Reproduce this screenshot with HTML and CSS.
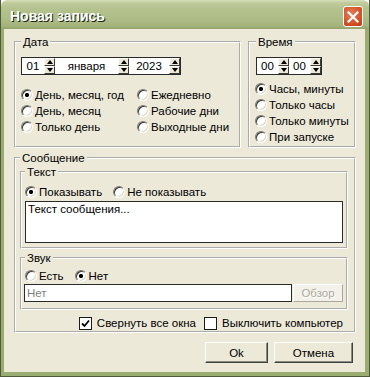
FILE: index.html
```html
<!DOCTYPE html>
<html lang="ru">
<head>
    <meta charset="UTF-8">
    <title>Новая запись</title>
    <link rel="stylesheet" href="styles.css">
</head>
<body>
    <div class="window">
        <div class="titlebar">
            <span class="title">Новая запись</span>
            <span class="close">
                <svg width="12" height="12" viewBox="0 0 12 12"><path d="M1.5 1.5 L10.5 10.5 M10.5 1.5 L1.5 10.5" stroke="#fff" stroke-width="2.2" stroke-linecap="square"/></svg>
            </span>
        </div>
        <div class="frame">
            <div class="client">
                <div class="top-row">
                    <fieldset class="group date">
                        <legend>Дата</legend>
                        <div class="spins">
                            <span class="val w22">01</span>
                            <span class="arrows"><i class="up"></i><i class="down"></i></span>
                            <span class="val w63">января</span>
                            <span class="arrows"><i class="up"></i><i class="down"></i></span>
                            <span class="val w40">2023</span>
                            <span class="arrows"><i class="up"></i><i class="down"></i></span>
                        </div>
                        <div class="date-options">
                            <label class="radio on">День, месяц, год</label>
                            <label class="radio">Ежедневно</label>
                            <label class="radio">День, месяц</label>
                            <label class="radio">Рабочие дни</label>
                            <label class="radio">Только день</label>
                            <label class="radio">Выходные дни</label>
                        </div>
                    </fieldset>
                    <fieldset class="group time">
                        <legend>Время</legend>
                        <div class="spins">
                            <span class="val w21">00</span>
                            <span class="arrows"><i class="up"></i><i class="down"></i></span>
                            <span class="val w21">00</span>
                            <span class="arrows"><i class="up"></i><i class="down"></i></span>
                        </div>
                        <div class="time-options">
                            <label class="radio on">Часы, минуты</label>
                            <label class="radio">Только часы</label>
                            <label class="radio">Только минуты</label>
                            <label class="radio">При запуске</label>
                        </div>
                    </fieldset>
                </div>

                <fieldset class="group message">
                    <legend>Сообщение</legend>
                    <fieldset class="group text">
                        <legend>Текст</legend>
                        <div class="radio-row">
                            <label class="radio on">Показывать</label>
                            <label class="radio">Не показывать</label>
                        </div>
                        <div class="memo">Текст сообщения...</div>
                    </fieldset>
                    <fieldset class="group sound">
                        <legend>Звук</legend>
                        <div class="radio-row">
                            <label class="radio">Есть</label>
                            <label class="radio on">Нет</label>
                        </div>
                        <div class="file-row">
                            <div class="edit">Нет</div>
                            <span class="btn disabled">Обзор</span>
                        </div>
                    </fieldset>
                    <div class="checks">
                        <label class="check on">
                            <span class="box"><svg width="9" height="9" viewBox="0 0 9 9"><path d="M1 4.5 L3.5 7 L8 1.5" fill="none" stroke="#000" stroke-width="1.8"/></svg></span>
                            Свернуть все окна
                        </label>
                        <label class="check">
                            <span class="box"></span>
                            Выключить компьютер
                        </label>
                    </div>
                </fieldset>

                <div class="buttons">
                    <span class="btn ok">Ok</span>
                    <span class="btn cancel">Отмена</span>
                </div>
            </div>
        </div>
    </div>
</body>
</html>
```

FILE: styles.css
```css
body {
    margin: 0;
    font-family: "Liberation Sans", Arial, sans-serif;
    font-size: 11.5px;
    color: #000;
    background: #fff;
}

.window {
    width: 370px;
    height: 377px;
    box-sizing: border-box;
    border: 1px solid #4f5a3a;
    border-top: none;
    display: flex;
    flex-direction: column;
}

.titlebar {
    height: 29px;
    flex: none;
    display: flex;
    align-items: flex-start;
    justify-content: space-between;
    background: linear-gradient(to bottom, #d6dfba 0, #bfcb9c 3px, #b4c28e 9px, #adbc86 20px, #a4b37c 26px, #94a36c 29px);
    border-radius: 6px 6px 0 0;
}

.title {
    padding: 8px 0 0 9px;
    font-size: 14px;
    font-weight: bold;
    color: #fff;
    text-shadow: 1px 1px 0 #1d2410;
}

.close {
    width: 20px;
    height: 21px;
    box-sizing: border-box;
    margin: 6px 6px 0 0;
    border: 1px solid #fff;
    border-radius: 3px;
    background: radial-gradient(circle at 40% 35%, #e77d58, #cf4c22 70%, #b63c17);
    display: flex;
    align-items: center;
    justify-content: center;
}

.frame {
    flex: 1;
    display: flex;
    border: 3px solid #9aac70;
    border-top: none;
    border-right-width: 4px;
    border-bottom-width: 4px;
}

.client {
    flex: 1;
    background: #ece9d8;
    padding: 6px 9px 0 10px;
    display: flex;
    flex-direction: column;
}

/* group boxes */
.group {
    margin: 0;
    min-width: 0;
    border: 2px groove #fff;
    box-sizing: border-box;
}

.group legend {
    padding: 0 2px;
    line-height: 14px;
}

.top-row {
    display: flex;
    gap: 7px;
    height: 113px;
}

.date {
    width: 227px;
    padding: 8px 4px 0 5px;
}

.time {
    flex: 1;
    padding: 8px 4px 0 6px;
}

/* spin edits */
.spins {
    display: flex;
    width: max-content;
    height: 16px;
    border: 1px solid #2a2a2a;
    background: #fff;
}

.val {
    line-height: 16px;
    text-align: center;
}

.w21 { width: 21px; }
.w22 { width: 22px; }
.w40 { width: 40px; }
.w63 { width: 63px; }

.arrows {
    width: 11px;
    display: flex;
    flex-direction: column;
}

.arrows i {
    flex: 1;
    box-sizing: border-box;
    background: #ece9d8;
    border: 1px solid;
    border-color: #fff #3a3a3a #3a3a3a #fff;
    display: flex;
    align-items: center;
    justify-content: center;
}

.arrows i::after {
    content: "";
    border-left: 3.5px solid transparent;
    border-right: 3.5px solid transparent;
}

.arrows .up::after {
    border-bottom: 4px solid #000;
}

.arrows .down::after {
    border-top: 4px solid #000;
}

/* radios and checks */
.radio {
    display: flex;
    align-items: center;
    gap: 2px;
    height: 16px;
    white-space: nowrap;
}

.radio::before {
    content: "";
    width: 12px;
    height: 12px;
    box-sizing: border-box;
    border-radius: 50%;
    border: 1px solid;
    border-color: #7d7b70 #fff #fff #7d7b70;
    box-shadow: inset 1px 1px 0 #3a3a3a, inset -1px -1px 0 #d8d5c6;
    background: #fff;
}

.radio.on::before {
    background: radial-gradient(circle, #000 0 1.8px, #fff 2.4px);
}

.date-options {
    display: grid;
    grid-template-columns: 116px auto;
    margin-top: 12px;
}

.time-options {
    margin: 6px 0 0 -1px;
}

.message {
    margin-top: 3px;
    padding: 0 6px 1px 4px;
}

.text {
    padding: 5px 3px 4px 3px;
}

.radio-row {
    display: flex;
    gap: 11px;
}

.memo {
    height: 42px;
    box-sizing: border-box;
    margin-top: 1px;
    padding: 1px 2px;
    background: #fff;
    border: 1px solid #2a2a2a;
}

.sound {
    margin-top: 2px;
    padding: 3px 3px 6px 3px;
}

.file-row {
    display: flex;
    gap: 1px;
    height: 18px;
    margin-left: -1px;
}

.edit {
    flex: 1;
    box-sizing: border-box;
    padding: 1px 2px;
    line-height: 14px;
    color: #7f7f7f;
    background: #fff;
    border: 1px solid #2a2a2a;
}

.btn {
    box-sizing: border-box;
    display: flex;
    align-items: center;
    justify-content: center;
    background: #ece9d8;
    border: 1px solid;
    border-color: #fff #404040 #404040 #fff;
    box-shadow: inset -1px -1px 0 #8c8a7c;
}

.btn.disabled {
    width: 50px;
    color: #aca899;
    background: #f3f2ea;
    text-shadow: 1px 1px 0 #fff;
    border-color: #fff #aca899 #aca899 #fff;
    box-shadow: none;
}

.checks {
    display: flex;
    justify-content: flex-end;
    gap: 8px;
    height: 14px;
    margin-top: 6px;
    padding-right: 5px;
}

.check {
    display: flex;
    align-items: center;
    gap: 5px;
    white-space: nowrap;
}

.box {
    width: 13px;
    height: 13px;
    box-sizing: border-box;
    border: 1px solid #1c1c1c;
    background: #fff;
    display: flex;
    align-items: center;
    justify-content: center;
}

.buttons {
    display: flex;
    justify-content: flex-end;
    gap: 6px;
    margin-top: 9px;
    padding-right: 3px;
}

.buttons .btn {
    height: 21px;
}

.ok {
    width: 63px;
}

.cancel {
    width: 79px;
}
```
